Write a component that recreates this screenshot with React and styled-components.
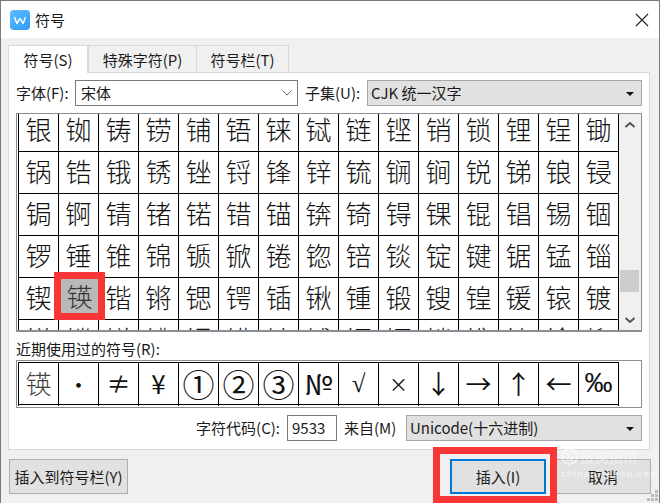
import React from "react";
import styled, { createGlobalStyle } from "styled-components";

const Global = createGlobalStyle`
  html, body { margin: 0; padding: 0; background: #f0f0f0; }
  * { box-sizing: border-box; }
`;
const UI = `"Noto Sans CJK SC", "Noto Sans", sans-serif`;

const Dialog = styled.div`
  width: 660px; height: 503px; display: flex; flex-direction: column;
  border: 1px solid #7a7a7a; border-bottom: 0; background: #f0f0f0;
  font: 15px/20px ${UI}; color: #1a1a1a; overflow: hidden; position: relative;
`;
const TitleBar = styled.div`
  height: 37px; flex: none; background: #fff; display: flex; align-items: center;
  padding: 0 8px 0 9px; gap: 5px;
`;
const Title = styled.span` flex: 1; font-size: 15px; `;
const Close = styled.svg` width: 14px; height: 14px; margin-right: 2px; `;
const Tabs = styled.div`
  flex: none; height: 34px; padding: 7px 0 0 7px; display: flex; align-items: flex-end;
`;
const Tab = styled.div`
  height: ${p => (p.$active ? 28 : 27)}px;
  width: ${p => p.$w}px; display: flex; align-items: center; justify-content: center;
  margin-right: ${p => (p.$active ? 0 : -1)}px;
  border: 1px solid #d9d9d9; border-bottom: 0; padding-top: 1px;
  background: ${p => (p.$active ? "#fff" : "#f0f0f0")};
  position: relative; z-index: ${p => (p.$active ? 1 : 0)};
  margin-bottom: ${p => (p.$active ? -1 : 0)}px;
`;
const Panel = styled.div`
  flex: none; margin: 0 9px 0 7px; height: 378px; background: #fff;
  border: 1px solid #d9d9d9; padding: 7px 8px 0 7px; display: flex; flex-direction: column;
`;
const Row = styled.div`
  display: flex; align-items: center; height: 26px; flex: none;
`;
const Label = styled.span`
  white-space: nowrap; flex: none; width: ${p => (p.$w ? `${p.$w}px` : "auto")};
  margin-left: ${p => p.$ml || 0}px; margin-right: ${p => p.$mr || 0}px;
`;
const Select = styled.div`
  height: 26px; width: ${p => p.$w}px; flex: none; display: flex; align-items: center;
  justify-content: space-between;
  padding: 0 ${p => (p.$white ? 4 : 6)}px 0 ${p => (p.$white ? 5 : 3)}px;
  border: 1px solid ${p => (p.$white ? "#7a7a7a" : "#a6a6a6")};
  background: ${p => (p.$white ? "#fff" : "#e1e1e1")};
`;
const Field = styled.div`
  height: 26px; width: 50px; flex: none; border: 1px solid #7a7a7a; background: #fff;
  padding-left: 4px; display: flex; align-items: center;
`;
const Caret = styled.i`
  width: 0; height: 0; border: 4px solid transparent; border-top: 4px solid #111;
  border-bottom: 0; margin-right: 1px; margin-top: 1px;
`;
const Chev = styled.svg` width: 12px; height: 8px; `;
const GridBox = styled.div`
  margin-top: 7px; height: 219px; width: 626px; flex: none; display: flex;
  border: 1px solid #8a8f96; border-bottom-width: 2px; background: #fff; overflow: hidden;
`;
const GridClip = styled.div`
  width: 602px; padding-left: 1px; flex: none; overflow: hidden; height: 100%; position: relative;
`;
const Grid = styled.div`
  display: grid; grid-template-columns: repeat(15, 40px); grid-auto-rows: 42px;
  margin-top: -4px; width: 601px; border-left: 1px solid #000;
`;
const Cell = styled.div`
  border-right: 1px solid #000; border-bottom: 1px solid #000; display: flex;
  align-items: center; justify-content: center; font: 300 26px/1 "Noto Sans CJK SC", serif;
  color: #111; position: relative; padding-bottom: 4px;
`;
const Mark = styled.b`
  position: absolute; left: -5px; top: -6px; width: 51px; height: 48px; z-index: 2;
  border: 7px solid #f93636; background: #b9b9b9; color: #333; font-weight: 300;
  display: flex; align-items: center; justify-content: center; padding-bottom: 1px;
`;
const Scroll = styled.div`
  width: 22px; flex: none; background: #f0f0f0; display: flex; flex-direction: column;
  align-items: center; justify-content: space-between; position: relative; padding: 7px 0 6px;
`;
const Thumb = styled.div`
  position: absolute; left: 1px; width: 19px; top: 156px; height: 22px; background: #cdcdcd;
`;
const RecentLabel = styled.div` margin-top: 7px; height: 21px; line-height: 20px; flex: none; `;
const RecentBox = styled.div`
  height: 48px; width: 626px; flex: none; border: 1px solid #8a8f96;
  padding: 1px 0 0 1px; background: #fff; overflow: hidden;
`;
const RecentRow = styled.div`
  display: grid; grid-template-columns: repeat(15, 40px); width: 601px; height: 44px;
  border-left: 1px solid #000; border-top: 1px solid #000;
`;
const RecentCell = styled.div`
  border-right: 1px solid #000; display: flex; align-items: center; justify-content: center;
  font: ${p => (p.$first ? 300 : 400)} ${p => p.$s || 25}px/1 ${p => p.$f || `"Noto Sans CJK SC"`}, sans-serif;
  color: ${p => (p.$first ? "#444" : "#111")}; height: 43px; overflow: hidden; padding-bottom: 3px;
  background: linear-gradient(#000, #000) 0 41px / 100% 1px no-repeat;
`;
const CodeRow = styled(Row)`
  margin-top: 7px; justify-content: flex-end; width: 626px;
`;
const Footer = styled.div`
  flex: 1; display: flex; justify-content: space-between; padding: 9px 8px 0 8px;
  position: relative;
`;
const Btn = styled.div`
  height: 35px; width: ${p => p.$w}px; flex: none; display: flex; align-items: center; justify-content: center;
  background: #e1e1e1; border: ${p => (p.$primary ? "2px solid #0078d7" : "1px solid #adadad")};
`;
const BtnGroup = styled.div` display: flex; gap: 9px; `;
const Outline = styled.div`
  position: absolute; left: 432px; top: -3px; width: 124px; height: 56px;
  border: 7px solid #f93636; pointer-events: none;
`;
const Watermark = styled.div`
  position: absolute; left: 560px; top: 447px; color: rgba(255,255,255,.55); pointer-events: none;
  display: flex; flex-direction: column; z-index: 3;
`;
const WmTop = styled.div` display: flex; align-items: center; gap: 2px; font: 14px/17px ${UI}; letter-spacing: .5px; `;
const WmSub = styled.div` font: 700 9px/10px "Liberation Sans", sans-serif; letter-spacing: 1.2px; margin-top: 4px; `;
const Grip = styled.svg` position: absolute; right: 0; bottom: 0; width: 13px; height: 13px; `;

const SERIF = `"Liberation Serif"`;
const chars = Array.from({ length: 6 * 15 }, (_, i) => String.fromCodePoint(0x94f6 + i));
const recent = [
  ["锳", 26], ["•", 22], ["≠", 24], ["¥", 26], ["①", 32], ["②", 32], ["③", 32], ["№", 28],
  ["√", 25, SERIF], ["×", 19], ["↓", 26], ["→", 26], ["↑", 26], ["←", 26], ["‰", 28, `"Liberation Sans"`],
];

const Logo = () => (
  <svg width="20" height="20" viewBox="0 0 20 20">
    <defs>
      <linearGradient id="lg" x1="0" y1="0" x2="1" y2="1">
        <stop offset="0" stopColor="#5cbcff" /><stop offset="1" stopColor="#2f9bfa" />
      </linearGradient>
    </defs>
    <rect width="20" height="20" rx="4" fill="url(#lg)" />
    <path d="M4.500 7l2.300 6.500 3.200-5 3.200 5L15.500 7" fill="none" stroke="#fff" strokeWidth="1.400" strokeLinejoin="round" />
  </svg>
);

export default function App() {
  return (
    <>
      <Global />
      <Dialog>
        <TitleBar>
          <Logo />
          <Title>符号</Title>
          <Close viewBox="0 0 14 14"><path d="M1 1l12 12M13 1L1 13" stroke="#222" strokeWidth="1.100" fill="none" /></Close>
        </TitleBar>
        <Tabs>
          <Tab $active $w={80}>符号(S)</Tab>
          <Tab $w={109}>特殊字符(P)</Tab>
          <Tab $w={93}>符号栏(T)</Tab>
        </Tabs>
        <Panel>
          <Row>
            <Label $w={59}>字体(F):</Label>
            <Select $white $w={223}>
              <span>宋体</span>
              <Chev viewBox="0 0 12 8"><path d="M1.500 1.500L6 6l4.500-4.500" stroke="#666" strokeWidth="1" fill="none" /></Chev>
            </Select>
            <Label $ml={7} $w={62}>子集(U):</Label>
            <Select $w={275}><span>CJK 统一汉字</span><Caret /></Select>
          </Row>
          <GridBox>
            <GridClip>
              <Grid>
                {chars.map(c => (
                  <Cell key={c}>{c === "锳" ? <Mark>{c}</Mark> : c}</Cell>
                ))}
              </Grid>
            </GridClip>
            <Scroll>
              <Chev viewBox="0 0 12 8"><path d="M1.500 6L6 2l4.500 4" stroke="#555" strokeWidth="2" fill="none" /></Chev>
              <Thumb />
              <Chev viewBox="0 0 12 8"><path d="M1.500 2L6 6l4.500-4" stroke="#555" strokeWidth="2" fill="none" /></Chev>
            </Scroll>
          </GridBox>
          <RecentLabel>近期使用过的符号(R):</RecentLabel>
          <RecentBox>
            <RecentRow>
              {recent.map(([c, s, f], i) => <RecentCell key={c} $s={s} $f={f} $first={i === 0}>{c}</RecentCell>)}
            </RecentRow>
          </RecentBox>
          <CodeRow>
            <Label $mr={7}>字符代码(C):</Label>
            <Field>9533</Field>
            <Label $ml={7} $w={62}>来自(M)</Label>
            <Select $w={236}><span>Unicode(十六进制)</span><Caret /></Select>
          </CodeRow>
        </Panel>
        <Footer>
          <Btn $w={119}>插入到符号栏(Y)</Btn>
          <BtnGroup>
            <Btn $primary $w={96}>插入(I)</Btn>
            <Btn $w={96}>取消</Btn>
          </BtnGroup>
          <Outline />
        </Footer>
        <Watermark>
          <WmTop>
            <svg width="17" height="17" viewBox="0 0 17 17"><circle cx="8.500" cy="8.500" r="7.500" fill="none" stroke="currentColor" strokeWidth="2" /><path d="M11.500 6c-1-1.500-5.500-1.500-5.500.5s5.500 1.500 5.500 4-5 2-6 .5" fill="none" stroke="currentColor" strokeWidth="1.500" /></svg>
            搜狗指南
          </WmTop>
          <WmSub>zhinan.sogou.com</WmSub>
        </Watermark>
        <Grip viewBox="0 0 13 13"><path d="M9 0h3v3H9zM5 4h3v3H5zM9 4h3v3H9zM1 8h3v3H1zM5 8h3v3H5zM9 8h3v3H9z" fill="#bbb" /></Grip>
      </Dialog>
    </>
  );
}
